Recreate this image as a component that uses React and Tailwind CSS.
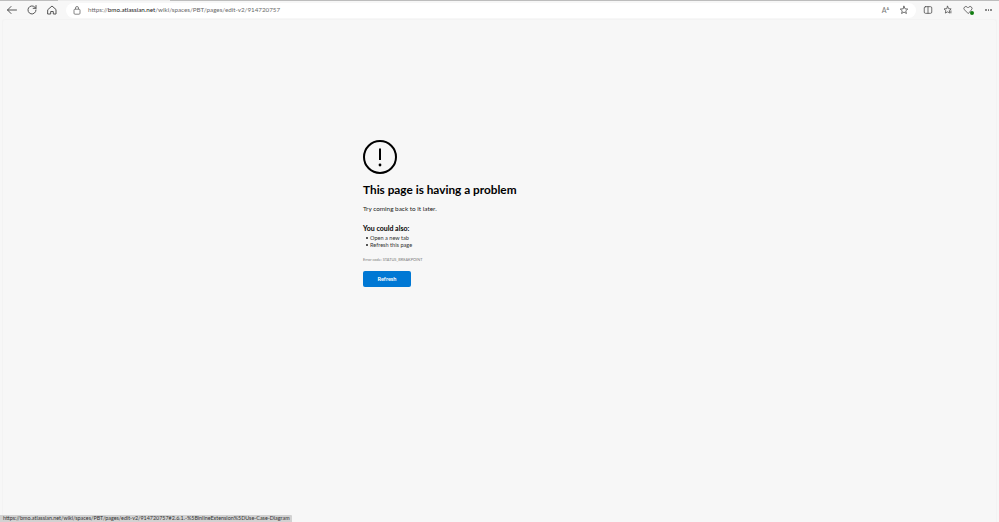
import React from "react";

const F = { fontFamily: '"Lato","Noto Sans",sans-serif' };

function Ic({ children, className = "", w = 12 }) {
  return (
    <svg width={w} height={w} viewBox="0 0 12 12" fill="none" stroke="#555" strokeWidth="1" strokeLinecap="round" strokeLinejoin="round" className={className}>
      {children}
    </svg>
  );
}

export default function App() {
  return (
    <div className="relative flex h-[522px] w-[999px] flex-col overflow-hidden bg-[#f7f7f7]" style={F}>
      <div className="flex h-[1px] w-full">
        <div className="w-[58px] bg-[#bdbdbd]" />
        <div className="w-[112px] bg-[#ececec]" />
        <div className="flex-1 bg-[#bdbdbd]" />
      </div>
      <div className="flex h-[18px] w-full items-center">
        <div className="ml-[6px] flex items-center gap-[8px]">
          <Ic><path d="M10.5 6H1.5M5 2.5 1.5 6 5 9.5" /></Ic>
          <Ic><path d="M10 6a4 4 0 1 1-1.2-2.9L10 4.3M10 1.5v2.8H7.2" /></Ic>
          <Ic><path d="M2 5.5 6 2l4 3.5V10H7.3V7.5H4.7V10H2z" /></Ic>
        </div>
        <div className="ml-[8px] flex h-[15px] w-[850px] items-center rounded-full bg-white pl-[7px]">
          <svg width="8" height="9" viewBox="0 0 8 9" fill="none" stroke="#666" strokeWidth="0.8">
            <rect x="1" y="3.2" width="6" height="5" rx="1" />
            <path d="M2.5 3.2V2a1.5 1.5 0 0 1 3 0v1.2" />
          </svg>
          <span className="ml-[7px] whitespace-nowrap text-[6.25px] leading-none text-[#6a6a6a]">
            https://<span className="text-[#222]">bmo.atlassian.net</span>/wiki/spaces/PBT/pages/edit-v2/914720757
          </span>
          <div className="ml-auto mr-[7px] flex items-center gap-[10px]">
            <span className="text-[7px] leading-none text-[#777]">Aᴬ</span>
            <Ic w={10}><path d="M6 1.5 7.3 4.6l3.2.3-2.4 2.1.8 3.2L6 8.5l-2.9 1.7.8-3.2L1.5 4.9l3.2-.3z" /></Ic>
          </div>
        </div>
        <div className="ml-[7px] flex items-center gap-[10px]">
          <Ic w={10}><rect x="1.5" y="2" width="9" height="8" rx="1.5" /><path d="M6 2v8" /></Ic>
          <Ic w={10}><path d="M5.5 1.5 6.8 4.4l3 .3-2.2 2 .6 3L5.5 8.2l-2.7 1.5.6-3-2.2-2 3-.3zM9.5 7v2.5" /></Ic>
          <div className="relative h-[10px] w-[10px]">
            <Ic w={10}><path d="M6 10 1.8 5.8a2.3 2.3 0 0 1 3.3-3.3l.9.9.9-.9a2.3 2.3 0 0 1 3.3 3.3z" /></Ic>
            <div className="absolute right-[-1px] bottom-[0px] h-[4px] w-[4px] rounded-full bg-[#107c10]" />
          </div>
          <div className="ml-[2px] flex gap-[1px]">
            <div className="h-[1.5px] w-[1.5px] rounded-full bg-[#666]" />
            <div className="h-[1.5px] w-[1.5px] rounded-full bg-[#666]" />
            <div className="h-[1.5px] w-[1.5px] rounded-full bg-[#666]" />
          </div>
        </div>
      </div>

      <main className="mx-[2px] flex flex-1 flex-col items-start rounded-t-[3px] border-x border-t border-[#f3f3f3] bg-[#f7f7f7] pl-[360px] pt-[120px]">
        <svg width="34" height="34" viewBox="0 0 34 34" fill="none" stroke="#000" strokeWidth="2">
          <circle cx="17" cy="17" r="16" />
          <path d="M17 8.5V20" strokeWidth="2" />
          <circle cx="17" cy="25" r="1.4" fill="#000" stroke="none" />
        </svg>
        <h1 className="mt-[8px] whitespace-nowrap text-[11.8px] font-bold leading-[16px] text-black">This page is having a problem</h1>
        <p className="mt-[6px] text-[6.4px] leading-[10px] text-[#222]">Try coming back to it later.</p>
        <p className="mt-[9px] text-[7px] font-bold leading-[10px] text-black">You could also:</p>
        <ul className="mt-[1px] list-none text-[5.6px] leading-[7px] text-[#333]">
          <li className="flex h-[7px] items-center"><span className="ml-[3px] mr-[2px] h-[2px] w-[2px] rounded-full bg-[#222]" />Open a new tab</li>
          <li className="flex h-[7px] items-center"><span className="ml-[3px] mr-[2px] h-[2px] w-[2px] rounded-full bg-[#222]" />Refresh this page</li>
        </ul>
        <p className="mt-[9px] text-[3.9px] leading-[6px] text-[#777]">Error code: STATUS_BREAKPOINT</p>
        <button className="mt-[8px] flex h-[16px] w-[48px] items-center justify-center rounded-[2px] bg-[#0078d4] text-[5.6px] font-bold text-white">Refresh</button>
      </main>

      <div className="absolute bottom-0 left-0 flex h-[7px] w-[292px] items-center overflow-hidden rounded-tr-[1px] bg-[#d2d2d2] pl-[3px]">
        <span className="whitespace-nowrap text-[5.4px] leading-none text-[#333]">https://bmo.atlassian.net/wiki/spaces/PBT/pages/edit-v2/914720757#2.6.1.-%5BinlineExtension%5DUse-Case-Diagram</span>
      </div>
    </div>
  );
}
